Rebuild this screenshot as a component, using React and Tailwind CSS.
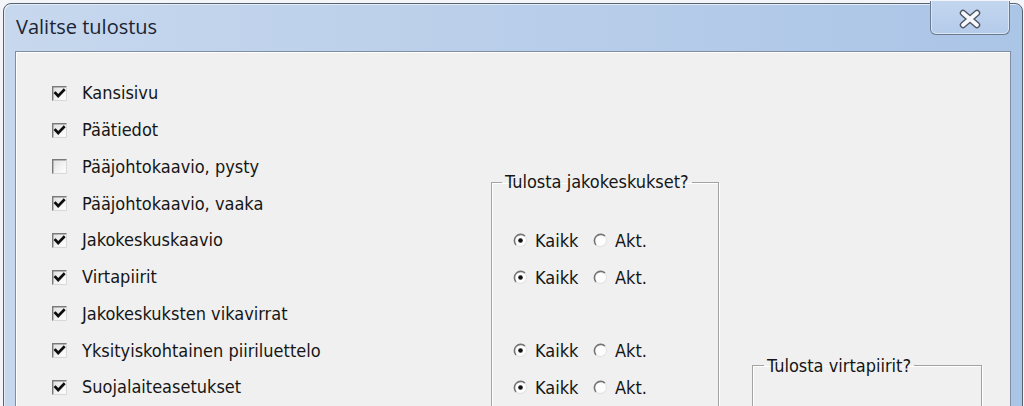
import React from "react";

const FONT = { fontFamily: '"DejaVu Sans Condensed", "DejaVu Sans", sans-serif' };

function CheckBox({ checked }) {
  return (
    <svg width="15" height="15" viewBox="0 0 15 15" className="shrink-0">
      <defs>
        <linearGradient id="cbg" x1="0" y1="0" x2="1" y2="1">
          <stop offset="0" stopColor="#e2e2e2" />
          <stop offset="1" stopColor="#ffffff" />
        </linearGradient>
      </defs>
      <rect x="0" y="0" width="15" height="15" fill="#f6f6f6" />
      <rect x="1.5" y="1.5" width="12" height="12" fill="url(#cbg)" />
      <path d="M0.7 15 V0.7 H15" fill="none" stroke="#7a7a7a" strokeWidth="1.5" />
      <path d="M14.5 0.5 V14.5 H0.5" fill="none" stroke="#d8d8d8" strokeWidth="1" />
      {checked && (
        <path d="M3.4 7 L6.2 10 L11.8 4.2" fill="none" stroke="#0d0d0d" strokeWidth="2.6" strokeLinecap="square" />
      )}
    </svg>
  );
}

function Radio({ checked }) {
  return (
    <svg width="15" height="15" viewBox="0 0 15 15" className="shrink-0">
      <circle cx="7.5" cy="7.5" r="6.3" fill="#fdfdfd" />
      <path d="M3.05 11.95 A6.3 6.3 0 0 1 11.95 3.05" fill="none" stroke="#737373" strokeWidth="1.6" />
      <path d="M11.95 3.05 A6.3 6.3 0 0 1 3.05 11.95" fill="none" stroke="#e4e4e4" strokeWidth="1.2" />
      {checked && <circle cx="7.5" cy="7.5" r="2.3" fill="#111" />}
    </svg>
  );
}

function RadioRow() {
  return (
    <div className="h-[36.75px] flex items-center pl-[21px]">
      <Radio checked />
      <span className="ml-[7px] w-[58px]">Kaikk</span>
      <Radio />
      <span className="ml-[7px]">Akt.</span>
    </div>
  );
}

const items = [
  ["Kansisivu", true],
  ["Päätiedot", true],
  ["Pääjohtokaavio, pysty", false],
  ["Pääjohtokaavio, vaaka", true],
  ["Jakokeskuskaavio", true],
  ["Virtapiirit", true],
  ["Jakokeskuksten vikavirrat", true],
  ["Yksityiskohtainen piiriluettelo", true],
  ["Suojalaiteasetukset", true],
];

export default function App() {
  return (
    <div className="w-[1024px] h-[406px] overflow-hidden bg-[#f3f5f8]">
      <div className="ml-[3px] mt-[3px] w-[1020px] h-[430px] rounded-t-[8px] border border-[#57626f] bg-[linear-gradient(90deg,#c7d8ee_0%,#bcd0ea_40%,#abc5e7_100%)] shadow-[inset_1px_1px_0_#e4edf8] flex flex-col">
        <div className="h-[47px] shrink-0 flex items-start pl-[12px] pr-[12px]">
          <div
            className="mt-[9px] text-[20px] leading-[28px] text-[#1b2433]"
            style={{ fontFamily: '"Open Sans", "Noto Sans", sans-serif' }}
          >
            Valitse tulostus
          </div>
          <div className="ml-auto -mt-[3px] w-[80px] h-[34px] rounded-b-[6px] border border-t-0 border-[#6a7a90] bg-[linear-gradient(180deg,#c3d6ef_0%,#b4cbea_100%)] shadow-[inset_1px_0_0_#dbe6f4,inset_-1px_0_0_#dbe6f4,inset_0_-1px_0_#dbe6f4] flex items-center justify-center">
            <svg width="24" height="20" viewBox="0 0 24 20" className="mt-[2px]">
              <path d="M5 4 L19 16 M19 4 L5 16" stroke="#4b5563" strokeWidth="6.5" strokeLinecap="round" />
              <path d="M5 4 L19 16 M19 4 L5 16" stroke="#f7f9fc" strokeWidth="3.8" strokeLinecap="round" />
            </svg>
          </div>
        </div>
        <div className="flex-1 min-h-0 mx-[11px] border border-[#7f8ea3] bg-[#f0f0f0] shadow-[inset_1px_1px_0_#ffffff]">
          <div className="flex items-start pl-[36px] pt-[23px] text-[18px] text-[#161616]" style={FONT}>
            <div className="w-[439px] flex flex-col">
              {items.map(([label, checked]) => (
                <div key={label} className="h-[36.75px] flex items-center gap-[15px]">
                  <CheckBox checked={checked} />
                  <span className="leading-[20px]">{label}</span>
                </div>
              ))}
            </div>
            <fieldset className="mt-[97px] w-[228px] h-[300px] border border-[#a3a3a3] shadow-[inset_1px_1px_0_#ffffff,1px_1px_0_#ffffff] pt-[30px]">
              <legend className="ml-[10px] px-[3px] leading-[20px]">Tulosta jakokeskukset?</legend>
              <RadioRow />
              <RadioRow />
              <div className="h-[36.75px]" />
              <RadioRow />
              <RadioRow />
            </fieldset>
            <fieldset className="ml-[33px] mt-[280.5px] w-[230px] h-[100px] border border-[#a3a3a3] shadow-[inset_1px_1px_0_#ffffff,1px_1px_0_#ffffff]">
              <legend className="ml-[11px] px-[3px] leading-[20px]">Tulosta virtapiirit?</legend>
            </fieldset>
          </div>
        </div>
      </div>
    </div>
  );
}
